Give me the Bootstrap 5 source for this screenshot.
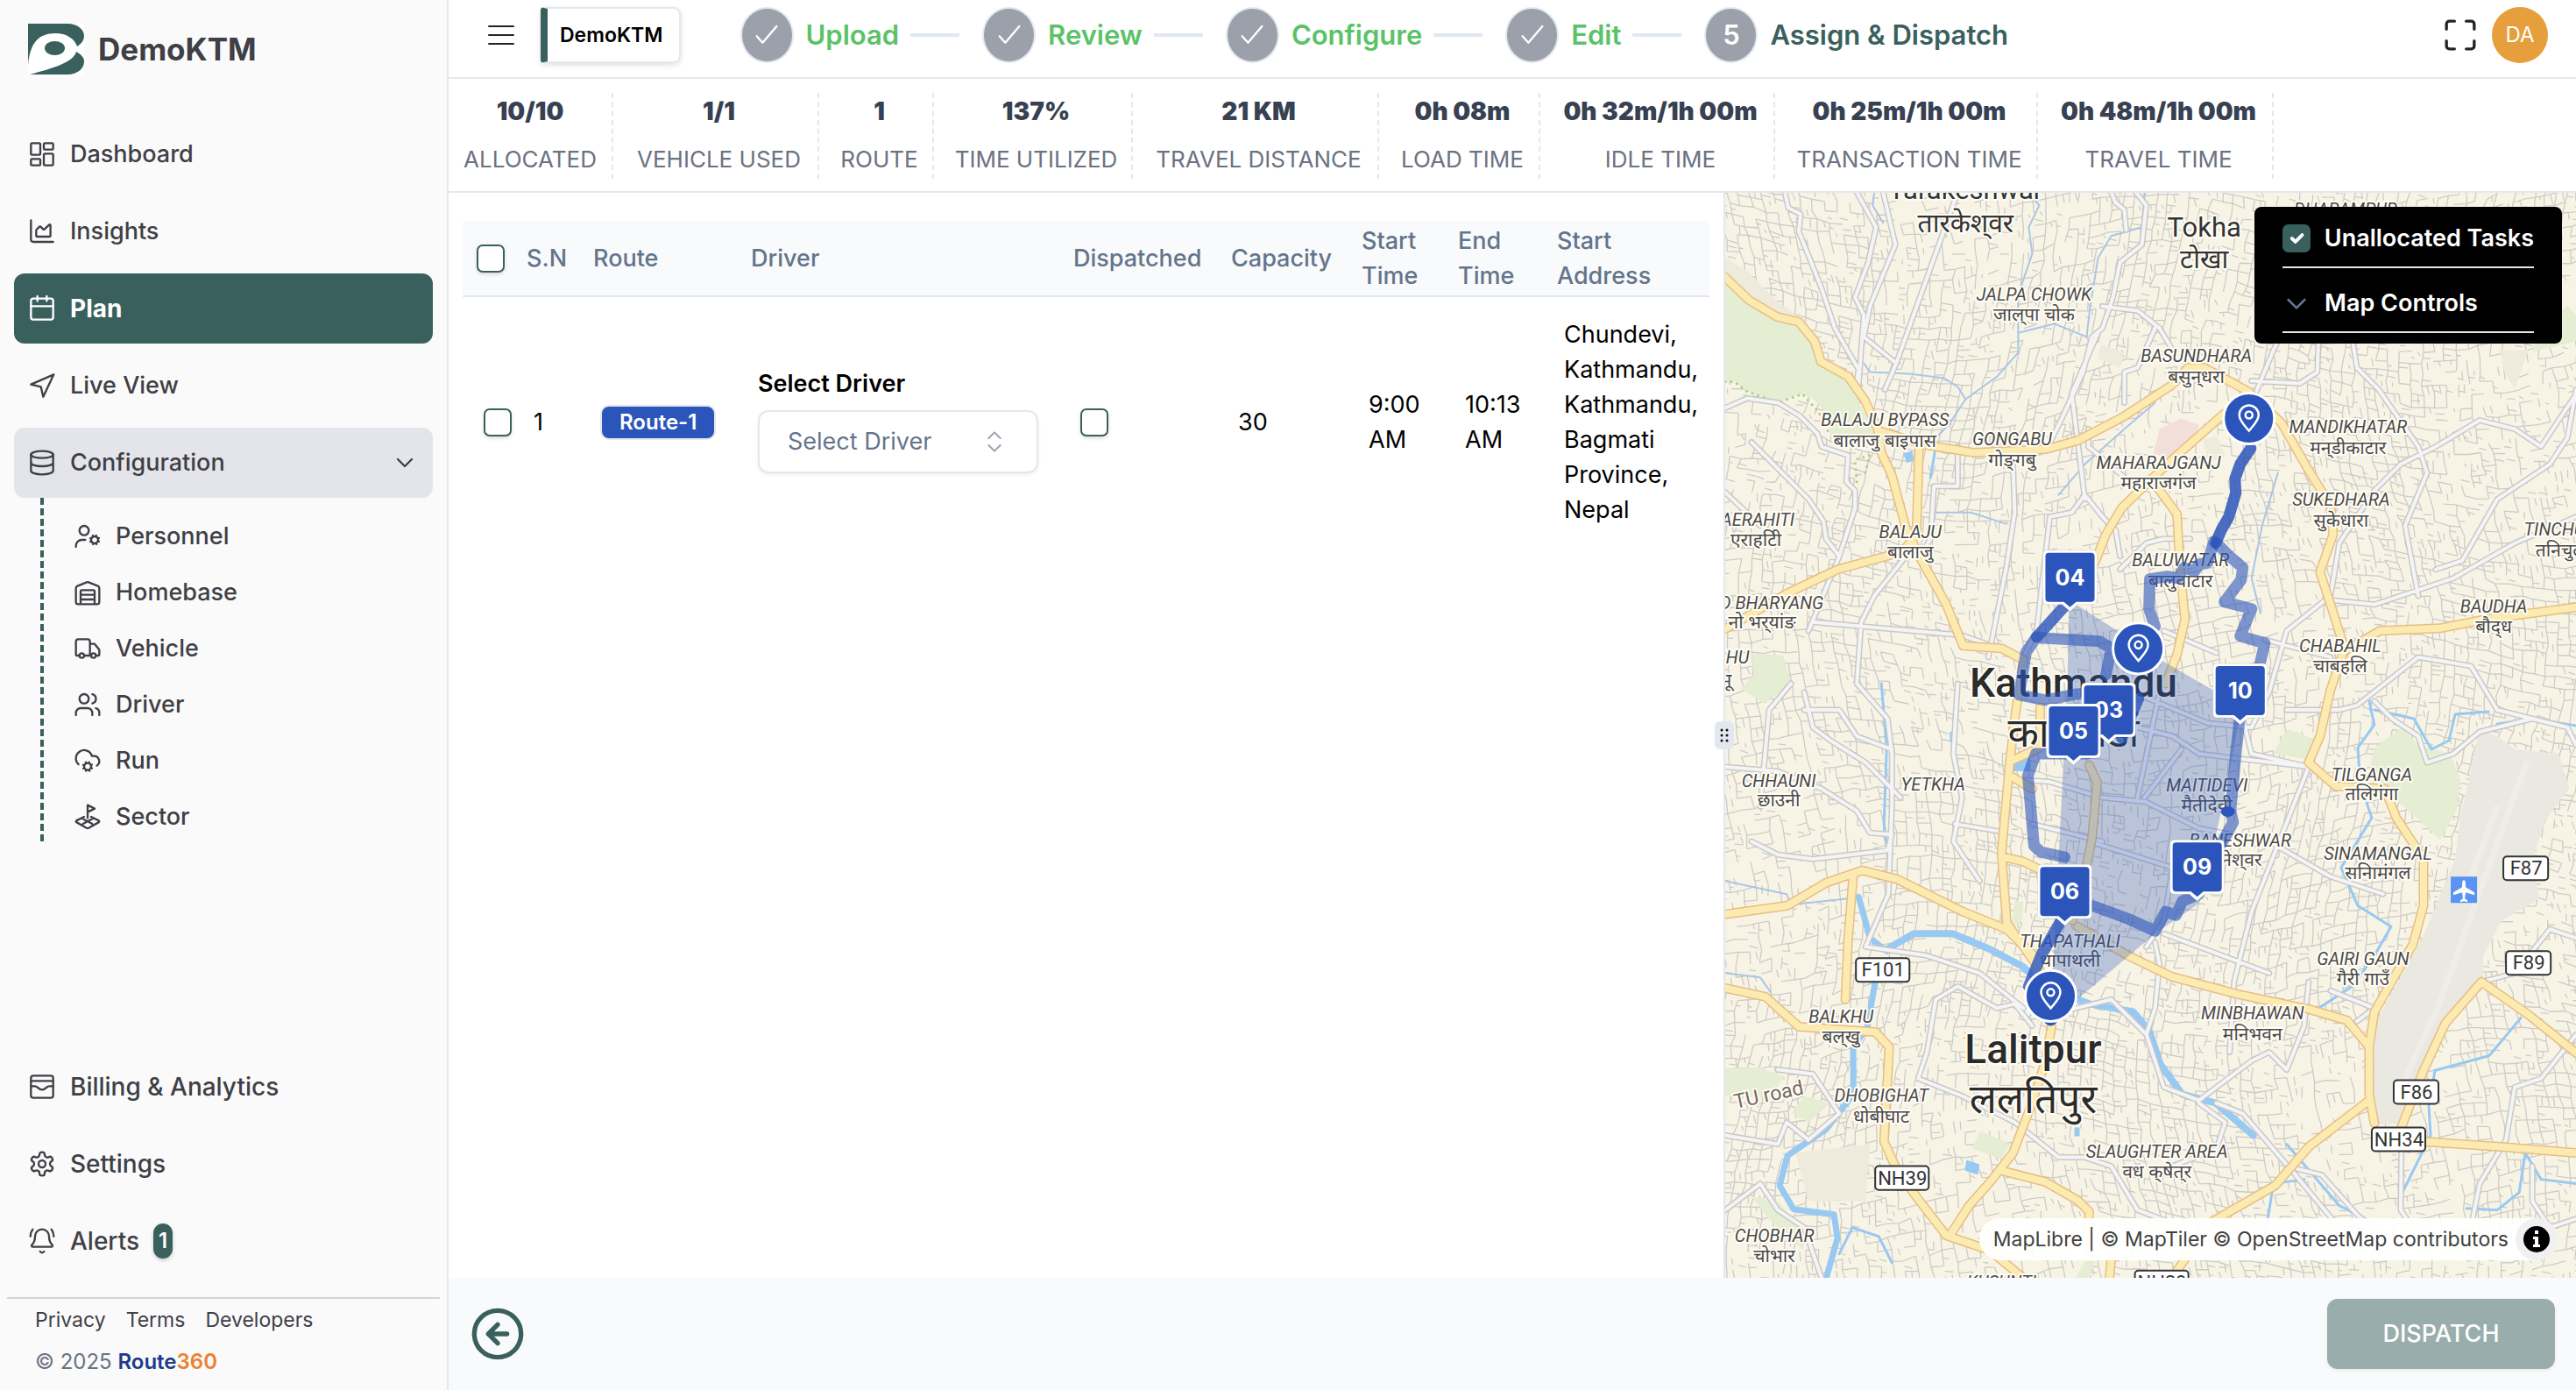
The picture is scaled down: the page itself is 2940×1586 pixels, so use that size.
<!DOCTYPE html>
<html lang="en">
<head>
<meta charset="utf-8">
<meta name="viewport" content="width=device-width, initial-scale=1">
<title>DemoKTM – Assign &amp; Dispatch</title>
<link href="https://cdn.jsdelivr.net/npm/bootstrap@5.3.0/dist/css/bootstrap.min.css" rel="stylesheet">
<style>
:root{--brand:#3a605e;--line:#e2e8f0;--ink:#3f3f46;--route:#2b55bb}
body{font-family:Inter,"Liberation Sans",sans-serif;font-size:27px;line-height:40px;color:#000;background:#fff}
a{color:inherit;text-decoration:none}
.ico{fill:none;stroke:currentColor;stroke-width:2;stroke-linecap:round;stroke-linejoin:round;flex:none;width:32px;height:32px}
/* sidebar */
.side{width:512px;background:#fafafa;border-right:2px solid var(--line);color:var(--ink);font-weight:500}
.brandrow{height:112px;padding-left:32px;gap:16px}
.brandname{font-size:35px;font-weight:700}
.side .ico{stroke-width:1.75}
.mainnav{gap:8px;padding:0 16px}
.mainnav .nav-link{height:80px;padding:0 16px;gap:16px;border-radius:12px;color:var(--ink);display:flex;align-items:center;width:100%}
.mainnav .nav-link.active{background:var(--brand);color:#fff;font-size:28px;font-weight:700}
.mainnav .nav-link.opened{background:#e4e5ea}
.subnav{margin:0 0 0 46px;padding-top:12px;background:repeating-linear-gradient(#3a605e 0 8px,transparent 8px 12px) left top/4px 100% no-repeat}
.subnav a{height:64px;display:flex;align-items:center;gap:16px;padding-left:38px}
.lownav .nav-link{font-size:28px}
.alertcount{background:var(--brand);color:#fff;width:22px;height:40px;border-radius:11px;font-size:24px;font-weight:600;text-align:center;box-shadow:0 2px 4px #0003}
.sidefoot{border-top:2px solid #d1d5db;margin:24px 8px 0;padding:4px 32px 12px;font-size:23px;font-weight:400}
.sidefoot a{margin-right:23px}
.copyline{font-size:24px}
/* header */
.topbar{height:90px;border-bottom:2px solid var(--line);padding:0 32px 8px 42px}
.menubtn{width:36px;height:48px}
.tenant{height:64px;padding:0 18px 0 14px;margin-left:27px;border:2px solid var(--line);border-left:8px solid var(--brand);border-radius:4px 8px 8px 4px;font-size:23px;font-weight:600;box-shadow:0 2px 6px #0002}
.steps{margin-left:68px;font-size:31px;font-weight:600;color:#5bc268}
.stepdot{width:61px;height:64px;border-radius:50%;background:#9ca0ab;border:2px solid var(--line);color:#fff;margin-right:14px}
.stepdot path{stroke-width:1.75}
.stepbar{width:56px;height:4px;background:var(--line);margin:0 26px 0 13px}
.avatar{width:64px;height:64px;border-radius:50%;background:#e69f3c;color:#fff;font-size:24px}
/* figures strip */
.stats{display:grid;grid-template-columns:188px 235px 131px 227px 281px 184px 268px 300px 269px;height:130px;padding:16px 0 14px;border-bottom:2px solid var(--line);text-align:center;font-size:26px}
.stats>div{border-right:2px dashed #e5e7eb;white-space:nowrap;color:#6b7280}
.stats>div+div{padding-left:8px}
.stats dt{font-size:28px;font-weight:900;color:#374151;line-height:42px;margin-bottom:14px}
.stats dd{margin:0}
/* table */
.tablepane{flex:0 0 60%;padding:32px 16px;border-right:2px solid var(--line)}
.plan{width:100%;table-layout:fixed;border-collapse:collapse}
.plan th{height:86px;padding:0 0 0 16px;background:#f8fafc;border-bottom:2px solid var(--line);color:#64748b;font-weight:500;line-height:40px}
.plan td{padding:23px 0 24px 24px;vertical-align:middle}
.tick{width:32px;height:32px;margin:0;border:2px solid var(--brand);border-radius:8px;display:block;box-shadow:0 2px 4px #0002;background-color:#fff}
.tick:checked{background-color:var(--brand);border-color:var(--brand);background-size:26px}
.routetag{display:block;width:fit-content;background:var(--route);color:#fff;font-size:24px;line-height:36px;font-weight:600;border:2px solid var(--line);border-radius:10px;padding:0 20px}
.driverlabel{display:block;font-weight:600;margin-bottom:10px}
.pick{width:320px;height:72px;margin-bottom:6px}
.pick select{width:100%;height:100%;appearance:none;border:2px solid var(--line);border-radius:12px;background:#fff;color:#64748b;padding-left:32px;box-shadow:0 2px 4px #0001}
.pick .ico{position:absolute;right:34px;top:20px;color:#9ca3af;pointer-events:none;stroke-width:1.500}
/* map */
.mapwrap{background:#f8f4e5;min-width:0}
.mapart{position:absolute;inset:0;width:100%;height:100%}
.area{font:italic 20px Roboto,"Noto Sans",sans-serif;fill:#4a4a4a}
.dev{font:21px "Noto Sans Devanagari","Noto Sans",Roboto,sans-serif;fill:#4a4a4a}
.lbl text{text-anchor:middle;paint-order:stroke;stroke:#fffdf5;stroke-width:4px;stroke-linejoin:round}
.lbl .town{font:31px Roboto,sans-serif;fill:#333}
.lbl .towndev{font:30px "Noto Sans Devanagari","Noto Sans",sans-serif;fill:#333}
.lbl .city{font:500 46px Roboto,sans-serif;fill:#2b2b2b}
.lbl .citydev{font:46px "Noto Sans Devanagari","Noto Sans",sans-serif;fill:#2b2b2b}
.lbl .roadname{font:23px Roboto,sans-serif;fill:#76675c}
.shield rect{fill:#fff;stroke:#333;stroke-width:2}
.shield text{font:22px Roboto,sans-serif;fill:#333;text-anchor:middle}
.stop text{font:700 25px Inter,sans-serif;fill:#fff;text-anchor:middle}
.mappanel{position:absolute;right:16px;top:16px;width:351px;background:#000;color:#fff;border-radius:8px;padding:14px 32px 12px;font-weight:600}
.maprow{height:56px;border-bottom:2px solid #e5e7eb;gap:16px;align-items:center;padding-bottom:10px}
.maprow+.maprow{height:74px;padding:8px 0 0}
.maprow label{white-space:nowrap}
.credit{position:absolute;right:21px;bottom:20px;height:48px;border-radius:24px;background:#fffffff0;padding-left:16px;font-size:23px;color:#404040;gap:8px}
.infobtn{width:48px;height:48px;border-radius:50%;background:#f0f0f0}
.grip{position:absolute;left:-12px;top:603px;width:22px;height:32px;border-radius:6px;background:var(--line)}
/* bottom bar */
.botbar{height:128px;background:#f8fafc;padding:0 24px}
.dispatch,.dispatch:disabled{width:260px;height:80px;border-radius:12px;background:#98adac;border:0;color:#fff;opacity:1;font-size:27px;font-weight:500;box-shadow:0 2px 4px #0001}
</style>
<script src="https://cdn.jsdelivr.net/npm/bootstrap@5.3.0/dist/js/bootstrap.bundle.min.js" defer></script>
</head>
<body>
<div class="d-flex vh-100 overflow-hidden">
<aside class="side d-flex flex-column flex-shrink-0">
  <a href="#" class="brandrow d-flex align-items-center">
    <svg width="64" height="58" viewBox="0 0 64 58" aria-hidden="true"><path fill="#fff" d="M0 0h64v58H0z"/><path fill="#3a605e" d="M0 0h45c12 0 19 7 19 14 0 5-3 9-8 12-3-9-12-15-25-15C12 11 2 22 0 48zM2 58c26-7 50-14 53-26 6 3 9 7 9 11 0 8-7 15-19 15z"/><ellipse cx="30.500" cy="28" rx="11.500" ry="8" fill="#3a605e"/></svg>
    <span class="brandname">DemoKTM</span>
  </a>
  <nav class="mainnav nav flex-column mt-4 flex-nowrap">
    <a class="nav-link" href="#"><svg class="ico" viewBox="0 0 24 24"><rect x="2.500" y="2.500" width="8" height="10" rx="1"/><rect x="13.500" y="2.500" width="8" height="5.500" rx="1"/><rect x="13.500" y="11.500" width="8" height="10" rx="1"/><rect x="2.500" y="16" width="8" height="5.500" rx="1"/></svg>Dashboard</a>
    <a class="nav-link" href="#"><svg class="ico" viewBox="0 0 24 24"><path d="M2.500 2.500v16.500a2 2 0 0 0 2 2h17"/><path d="M7 11.200c0-.3.100-.5.300-.7L9.600 8.200a1 1 0 0 1 1.400 0l1.800 1.800a1 1 0 0 0 1.400 0L18 6.400a.7.700 0 0 1 1.200.5V15.500a1 1 0 0 1-1 1H8a1 1 0 0 1-1-1z"/></svg>Insights</a>
    <a class="nav-link active" href="#"><svg class="ico" viewBox="0 0 24 24"><path d="M8 1.500v4M16 1.500v4M2.500 10h19"/><rect x="2.500" y="3.500" width="19" height="18" rx="2"/></svg>Plan</a>
    <a class="nav-link" href="#"><svg class="ico" viewBox="0 0 24 24"><path d="M2.500 11 22 2.500 13 21.500 11 13z"/></svg>Live View</a>
    <a class="nav-link opened" href="#"><svg class="ico" viewBox="0 0 24 24"><ellipse cx="12" cy="5" rx="9.500" ry="3"/><path d="M2.500 5v14c0 1.700 4.300 3 9.500 3s9.500-1.300 9.500-3V5M2.500 12c0 1.700 4.300 3 9.500 3s9.500-1.300 9.500-3"/></svg><span class="flex-grow-1">Configuration</span><svg class="ico" viewBox="0 0 24 24"><path d="m6 9 6 6 6-6"/></svg></a>
  </nav>
  <nav class="subnav">
    <a href="#"><svg class="ico" viewBox="0 0 24 24"><circle cx="9" cy="7" r="4"/><path d="M10 15H7a5 5 0 0 0-5 5v1"/><circle cx="18" cy="15" r="3"/><path d="m21.700 16.400-.9-.3M15.200 13.900l-.9-.3M16.600 18.700l.3-.9M19.100 12.200l.3-.9M19.600 18.700l-.4-1M16.800 12.300l-.4-1M14.300 16.600l1-.4M20.700 13.800l1-.4"/></svg>Personnel</a>
    <a href="#"><svg class="ico" viewBox="0 0 24 24"><path d="M22 8.400V20a2 2 0 0 1-2 2H4a2 2 0 0 1-2-2V8.400a2 2 0 0 1 1.300-1.900l8-3.200a2 2 0 0 1 1.500 0l8 3.200A2 2 0 0 1 22 8.400zM6 18h12M6 14h12M6 22V11a1 1 0 0 1 1-1h10a1 1 0 0 1 1 1v11"/></svg>Homebase</a>
    <a href="#"><svg class="ico" viewBox="0 0 24 24"><path d="M14 18V6a2 2 0 0 0-2-2H4a2 2 0 0 0-2 2v11a1 1 0 0 0 1 1h2M15 18H9M19 18h2a1 1 0 0 0 1-1v-3.600a1 1 0 0 0-.2-.6l-3.500-4.400a1 1 0 0 0-.8-.4H14"/><circle cx="17" cy="18" r="2"/><circle cx="7" cy="18" r="2"/></svg>Vehicle</a>
    <a href="#"><svg class="ico" viewBox="0 0 24 24"><path d="M16 21v-2a4 4 0 0 0-4-4H6a4 4 0 0 0-4 4v2"/><circle cx="9" cy="7" r="4"/><path d="M22 21v-2a4 4 0 0 0-3-3.900M16 3.100a4 4 0 0 1 0 7.800"/></svg>Driver</a>
    <a href="#"><svg class="ico" viewBox="0 0 24 24"><circle cx="12" cy="17" r="3"/><path d="M4.200 15.100A7 7 0 1 1 15.700 8h1.800a4.500 4.500 0 0 1 2.500 8.200M15.700 18.400l-.9-.3M9.200 15.900l-.9-.3M10.600 20.700l.3-.9M13.100 14.200l.3-.9M13.600 20.700l-.4-1M10.800 14.300l-.4-1M8.300 18.600l1-.4M14.700 15.800l1-.4"/></svg>Run</a>
    <a href="#"><svg class="ico" viewBox="0 0 24 24"><path d="m15 12 6.600 3.300a.8.800 0 0 1 0 1.300L12.900 21.600a2 2 0 0 1-1.800 0L2.400 16.600a.8.800 0 0 1 0-1.300L9 12M12 13V2l6 3-6 3M7.500 13.500l8.500 4.500M16.500 13.500 8 18"/></svg>Sector</a>
  </nav>
  <nav class="mainnav lownav nav flex-column mt-auto flex-nowrap">
    <a class="nav-link" href="#"><svg class="ico" viewBox="0 0 24 24"><rect x="2.500" y="2.500" width="19" height="19" rx="2"/><path d="M2.500 7h19M2.500 11.500h3.500c1 0 1.500.5 2 1 1 1 2.500 2 4 2s3-1 4-2c.5-.5 1-1 2-1h3.500"/></svg>Billing &amp; Analytics</a>
    <a class="nav-link" href="#"><svg class="ico" viewBox="0 0 24 24"><path d="M12.200 2h-.4a2 2 0 0 0-2 2v.2a2 2 0 0 1-1 1.700l-.4.300a2 2 0 0 1-2 0l-.2-.1a2 2 0 0 0-2.700.7l-.2.400a2 2 0 0 0 .7 2.700l.2.100a2 2 0 0 1 1 1.700v.5a2 2 0 0 1-1 1.800l-.2.100a2 2 0 0 0-.7 2.700l.2.400a2 2 0 0 0 2.700.7l.2-.1a2 2 0 0 1 2 0l.4.300a2 2 0 0 1 1 1.700v.2a2 2 0 0 0 2 2h.4a2 2 0 0 0 2-2v-.2a2 2 0 0 1 1-1.700l.4-.3a2 2 0 0 1 2 0l.2.100a2 2 0 0 0 2.700-.7l.2-.4a2 2 0 0 0-.7-2.700l-.2-.1a2 2 0 0 1-1-1.800v-.5a2 2 0 0 1 1-1.700l.2-.1a2 2 0 0 0 .7-2.700l-.2-.4a2 2 0 0 0-2.700-.7l-.2.100a2 2 0 0 1-2 0l-.4-.3a2 2 0 0 1-1-1.700V4a2 2 0 0 0-2-2z"/><circle cx="12" cy="12" r="3"/></svg>Settings</a>
    <a class="nav-link" href="#"><svg class="ico" viewBox="0 0 24 24"><path d="M10.300 21a2 2 0 0 0 3.400 0M22 8c0-2.300-.8-4.300-2-6M2 8c0-2.300.8-4.300 2-6M3.300 15.300A1 1 0 0 0 4 17h16a1 1 0 0 0 .7-1.700C19.400 14 18 12.500 18 8A6 6 0 0 0 6 8c0 4.500-1.400 6-2.700 7.300"/></svg>Alerts<span class="alertcount">1</span></a>
  </nav>
  <div class="sidefoot">
    <div><a href="#">Privacy</a><a href="#">Terms</a><a href="#">Developers</a></div>
    <div class="copyline mt-2"><span style="color:#6b7280">© 2025</span> <b class="fw-semibold"><span style="color:#1e3a8a">Route</span><span style="color:#ed8130">360</span></b></div>
  </div>
</aside>

<div class="d-flex flex-column flex-grow-1" style="min-width:0">
<header class="topbar d-flex align-items-center">
  <button class="menubtn btn p-0 border-0" aria-label="Menu"><svg class="ico" viewBox="0 0 32 32"><path d="M2 6h28M2 16h28M2 26h28"/></svg></button>
  <div class="tenant d-flex align-items-center">DemoKTM</div>
  <div class="steps d-flex align-items-center">
    <span class="stepdot d-flex align-items-center justify-content-center"><svg class="ico" viewBox="0 0 24 24"><path d="m3.500 13 5 5.500L20.500 4.500"/></svg></span>Upload<span class="stepbar"></span>
    <span class="stepdot d-flex align-items-center justify-content-center"><svg class="ico" viewBox="0 0 24 24"><path d="m3.500 13 5 5.500L20.500 4.500"/></svg></span>Review<span class="stepbar"></span>
    <span class="stepdot d-flex align-items-center justify-content-center"><svg class="ico" viewBox="0 0 24 24"><path d="m3.500 13 5 5.500L20.500 4.500"/></svg></span>Configure<span class="stepbar"></span>
    <span class="stepdot d-flex align-items-center justify-content-center"><svg class="ico" viewBox="0 0 24 24"><path d="m3.500 13 5 5.500L20.500 4.500"/></svg></span>Edit<span class="stepbar"></span>
    <span class="stepdot d-flex align-items-center justify-content-center">5</span><span style="color:#3a605e">Assign &amp; Dispatch</span>
  </div>
  <button class="btn p-0 border-0 ms-auto me-3" aria-label="Full screen"><svg class="ico d-block" style="width:40px;height:40px" viewBox="0 0 24 24"><path d="M2.500 8V4.500a2 2 0 0 1 2-2H8M16 2.500h3.500a2 2 0 0 1 2 2V8M21.500 16v3.500a2 2 0 0 1-2 2H16M8 21.500H4.500a2 2 0 0 1-2-2V16"/></svg></button>
  <span class="avatar d-flex align-items-center justify-content-center">DA</span>
</header>

<dl class="stats m-0">
  <div><dt>10/10</dt><dd>ALLOCATED</dd></div><div><dt>1/1</dt><dd>VEHICLE USED</dd></div><div><dt>1</dt><dd>ROUTE</dd></div><div><dt>137%</dt><dd>TIME UTILIZED</dd></div><div><dt>21 KM</dt><dd>TRAVEL DISTANCE</dd></div><div><dt>0h 08m</dt><dd>LOAD TIME</dd></div><div><dt>0h 32m/1h 00m</dt><dd>IDLE TIME</dd></div><div><dt>0h 25m/1h 00m</dt><dd>TRANSACTION TIME</dd></div><div><dt>0h 48m/1h 00m</dt><dd>TRAVEL TIME</dd></div>
</dl>

<main class="d-flex flex-grow-1" style="min-height:0">
<section class="tablepane">
<table class="plan">
<colgroup><col style="width:57px"><col style="width:76px"><col style="width:180px"><col style="width:368px"><col style="width:180px"><col style="width:149px"><col style="width:110px"><col style="width:113px"><col></colgroup>
<thead><tr><th><input class="form-check-input tick" type="checkbox" aria-label="Select all"></th><th>S.N</th><th>Route</th><th>Driver</th><th>Dispatched</th><th>Capacity</th><th>Start<br>Time</th><th>End<br>Time</th><th>Start<br>Address</th></tr></thead>
<tbody><tr><td><input class="form-check-input tick" type="checkbox" aria-label="Select route 1"></td><td>1</td><td><span class="routetag">Route-1</span></td>
<td><label class="driverlabel" for="drv">Select Driver</label><div class="pick position-relative"><select id="drv"><option>Select Driver</option></select><svg class="ico" viewBox="0 0 24 24"><path d="m7 15 5 5 5-5M7 9l5-5 5 5"/></svg></div></td>
<td><input class="form-check-input tick" type="checkbox" aria-label="Dispatched"></td><td>30</td><td>9:00<br>AM</td><td>10:13<br>AM</td><td>Chundevi,<br>Kathmandu,<br>Kathmandu,<br>Bagmati<br>Province,<br>Nepal</td></tr></tbody>
</table>
</section>

<section class="mapwrap flex-grow-1 position-relative">
<svg class="mapart" viewBox="0 0 970 1238" preserveAspectRatio="xMidYMid slice" role="img" aria-label="Map of Kathmandu with Route-1">
<path id="streets" fill="none" stroke="#cdcbc8" stroke-width="1.300" stroke-linejoin="round"/>
<g fill="#e5edd2">
<path d="M0 86 27 120 59 142 84 150 98 170 106 195 138 213 155 245 172 278 120 278 118 255 100 235 84 230 60 240 25 227 10 215 0 218z"/>
<path d="M740 633 771 610 790 630 827 640 838 670 834 703 815 738 790 715 765 693 734 663z"/>
<path d="M640 612 668 622 668 647 625 640z"/><path d="M30 525 66 528 75 560 45 583 18 566 32 550z"/>
<path d="M0 998 40 998 68 1008 50 1032 0 1030z"/><path d="M90 1030 120 1038 95 1060 76 1050z"/><path d="M290 1070 325 1085 315 1102 282 1090z"/>
<path d="M920 182 925 155 960 130 970 140 970 170 945 176z"/><path d="M30 1145 60 1150 78 1172 95 1190 88 1205 50 1170z"/><path d="M330 808 340 808 338 830 326 840z"/><path d="M410 1218 422 1218 415 1238 400 1238z"/>
</g>
<path fill="none" stroke="#a8cd85" stroke-width="3" stroke-linecap="round" stroke-dasharray="0 7" d="M0 216 10 216 25 227 60 240 88 230 106 250 120 278M150 330 148 305 165 300 158 325M40 124 60 130"/>
<path fill="#eeebdc" d="M884 180 915 180 900 225 888 205zM0 75 25 90 60 125 95 150 50 136 0 95zM80 1095 165 1085 160 1150 95 1150zM545 282 560 278 570 300 550 310zM428 174 455 182 450 200 425 190z"/>
<path fill="#f3dfda" d="M488 298 495 270 520 258 540 265 535 285 515 302 500 302z"/>
<path fill="#e9e8e1" d="M859 612 880 620 900 635 950 640 962 680 935 715 920 760 928 805 885 830 864 870 864 895 832 930 803 1000 778 1062 745 1062 738 1020 742 945 795 850 832 760 838 712 850 660z"/>
<path fill="none" stroke="#eeede8" stroke-width="7" d="M914 648 812 930 766 1030M880 700 850 780"/>
<g fill="none" stroke="#97c9f2" stroke-linecap="round" stroke-linejoin="round">
<path stroke-width="2" stroke="#a9c6e6" d="M345 0 358 15 346 40 350 70 334 117 334 183 310 210 274 236 255 265 240 280M158 195 165 205 210 207 250 212 265 222 274 236M335 160 375 150 412 165 416 130 425 75 440 50 475 40 478 0M490 240 455 270 410 310 380 345M170 0 168 15 180 35M630 320 612 380 600 440 610 480M0 785 70 800 75 812 140 805M0 890 40 895 52 912M240 365 280 365 320 378"/>
<path stroke-width="3" d="M178 560 184 633 181 720 186 760M240 290 234 325"/>
<path stroke-width="3" d="M734 580 740 607 721 633 724 675 737 713 702 770 721 813 759 837 740 870 715 905 678 929M740 590 785 600 805 635 825 625 832 595 870 592M880 606 920 600 970 608M907 941 871 984 809 1001 802 1041 804 1075 771 1142M970 1130 930 1125 912 1095 905 1140 880 1160 845 1158M560 1195 615 1190 625 1130 660 1125M130 1210 145 1180 175 1190 190 1220M640 1085 700 1155 730 1170"/>
<path stroke-width="8" d="M184 863 215 845 259 845 302 863 340 883 365 907 415 925 465 934 484 957 496 994 521 1028 559 1038 602 1075"/>
<path stroke-width="7" d="M171 900 162 951 146 974 146 1028 115 1068 71 1098 62 1132 78 1159 124 1165 128 1192 115 1238M152 803 165 850 184 865"/>
</g>
<path fill="#97c9f2" d="M328 645h20v15h-20zM256 615h6v12h-6zM275 1103 290 1108 288 1120 273 1115zM398 1066h6v10h-6zM203 298l10-3 2 10-8 4z"/>
<g fill="none" stroke-linecap="round" stroke-linejoin="round">
<g id="whites"><path d="M68 0 72 18 86 25 84 45 110 110 125 155 152 202 150 215M150 0 172 40 163 80 148 120 158 140 152 220M180 0 194 60 165 130 158 165 195 195M265 0 195 195 182 225M410 350 395 230 425 160M468 0 480 15 475 60 450 80 442 120 430 155 418 165 408 205 385 255 372 282M440 0 445 12 455 20 457 43M430 130 470 135 495 155 510 180M455 240 455 205 470 200 490 155M414 270 414 290 455 325M600 215 655 218 675 205 677 140M600 240 625 180 640 150 680 170 715 168 720 200 745 225 790 290 800 320 775 380 790 460M970 230 930 290 900 270 860 260 810 290 770 310 740 340 700 400 690 460 640 500 620 570 600 610M970 225 960 280 940 310 880 350 840 420 810 430M0 246 25 235 60 240 85 255 105 275 110 290 140 300 138 330 148 340M0 342 40 380M30 285 70 325 95 350 112 375 115 395 130 415M148 340 148 360 130 415M265 290 265 335 238 335 234 395 225 410M340 530 355 500 370 370 395 365 410 345 430 370 445 385 450 415M328 310 330 365 320 430 300 530M210 410 170 460 155 490 150 560 185 600 190 640 190 700 186 800 160 860 230 870 290 890 340 930M100 490 270 505 340 530M130 415 95 500M90 590 130 590 150 620 190 635M75 560 50 590 40 700M90 570 100 610 120 625 160 650 200 690M0 655 60 660 110 680 150 705 165 730 190 732 185 750 100 760 60 755 30 740M265 560 260 640 270 690 260 740 290 785M262 720 310 728M340 670 370 672 430 690 480 695 540 725 620 740 690 780 750 800M465 570 550 605 600 610M470 610 510 620 540 640 665 655M520 635 478 690M495 570 470 690M415 740 510 770 500 830 480 860M500 500 560 525M615 510 690 530M665 655 600 820 580 900 575 980M640 590 700 590 720 585 790 530 850 540 880 590 960 610 970 630M740 580 760 600 790 620 800 650 830 640 860 615 920 600M665 655 600 640 590 600 620 570M490 855 495 880 490 930 480 960M350 720 430 740M690 465 740 470 830 440 900 400 970 370M450 430 480 400 500 395 530 395M60 1000 100 1005 130 1050 95 1080 70 1060 60 1085 0 1075M220 1010 230 980 240 920 265 905 310 930 330 925 350 950M220 1010 270 1030 330 1060 380 1100 410 1100 440 1110 470 1160 510 1175M0 1160 40 1130 60 1160 90 1180 110 1238M560 1038 590 1050 650 1120 700 1180 760 1190M350 940 400 930 440 920 480 960 500 1020 540 1035 600 990 620 980 640 1000 660 950 665 900M720 945 740 930 690 910M620 890 500 845M540 1038 570 1060 560 1090 510 1110M640 1110 680 1120 720 1165 750 1190M862 900 900 890 940 840 970 850M970 960 930 1010 900 1020 890 1080 860 1130 850 1180M920 1110 920 1150 940 1180 970 1170M771 1070 770 1160 790 1190 880 1185"/></g>
<g id="yellows"><path d="M0 97 27 123 59 142 84 148 102 170 109 193 140 210 159 237 174 270 178 297 190 323 206 383 224 420 252 470 271 517 315 520 340 533 331 593 324 653 315 753 321 833 359 887M178 273 228 288 284 297 365 293 402 283 452 257 509 220 528 200 546 200 596 227 634 263 665 317 690 357 693 390 678 433 690 470 706 520 690 567 678 620 665 650 696 677 752 680 765 713 796 760 796 813 784 857 740 934 734 974 734 1028 740 1061M221 290 218 390 202 410 128 430 71 457 0 498M568 253 515 300 490 323 452 360 434 390 421 423M493 337 515 367 518 423 524 487 515 527 502 560M706 523 746 500 815 497 865 487 970 473M0 823 71 813 115 787 156 773 196 783 271 820 321 840 359 877M146 777 140 853 137 920M0 907 46 917 84 951 171 957 187 974 184 1028 181 1082 196 1115 221 1149 252 1189 302 1206 340 1238M256 1189 278 1155 302 1128 328 1095 346 1048 365 991 372 951M315 1115 365 1128 402 1149 415 1162 412 1200M440 1215 438 1238M402 837 459 870 509 894 584 914 665 931 709 944 734 974M734 1035 665 1088 627 1132 552 1175 509 1238M771 1065 796 1001 821 947 862 900 915 937 970 981M796 1082 884 1088 970 1095M359 587 359 633 328 647M415 653 424 673 418 737 412 767 396 830M328 667 350 680M315 757 340 763 365 775"/></g>
</g>
<g class="lbl">
<text class="town" x="274" y="8">Tarakeshwar</text><text class="towndev" x="274" y="46">तारकेश्&zwnj;वर</text>
<text class="town" x="546" y="51">Tokha</text><text class="towndev" x="546" y="87">टोखा</text>
<text class="area" x="707" y="27">DHARAMPUR</text>
<text class="area" x="352" y="124">JALPA CHOWK</text><text class="dev" x="352" y="147">जाल्&zwnj;पा चोक</text>
<text class="area" x="537" y="194">BASUNDHARA</text><text class="dev" x="537" y="218">बसुन्&zwnj;धरा</text>
<text class="area" x="182" y="266">BALAJU BYPASS</text><text class="dev" x="182" y="290">बालाजु बाइपास</text>
<text class="area" x="327" y="288">GONGABU</text><text class="dev" x="327" y="312">गोङ्&zwnj;गबु</text>
<text class="area" x="710" y="274">MANDIKHATAR</text><text class="dev" x="710" y="298">मन्&zwnj;डीकाटार</text>
<text class="area" x="494" y="315">MAHARAJGANJ</text><text class="dev" x="494" y="338">महाराजगंज</text>
<text class="area" x="702" y="357">SUKEDHARA</text><text class="dev" x="702" y="381">सुकेधारा</text>
<text class="area" x="37" y="380">AERAHITI</text><text class="dev" x="35" y="403">एराहटिी</text>
<text class="area" x="211" y="394">BALAJU</text><text class="dev" x="211" y="417">बालाजु</text>
<text class="area" x="956" y="391">TINCHULE</text><text class="dev" x="952" y="415">तनिचुले</text>
<text class="area" x="519" y="426">BALUWATAR</text><text class="dev" x="519" y="450">बालुवाटार</text>
<text class="area" x="53" y="475">D BHARYANG</text><text class="dev" x="42" y="497">नो भर्&zwnj;यांङ</text>
<text class="area" x="876" y="479">BAUDHA</text><text class="dev" x="876" y="502">बौद्&zwnj;ध</text>
<text class="area" x="8" y="537">BHU</text><text class="dev" x="0" y="563">भू</text>
<text class="area" x="701" y="524">CHABAHIL</text><text class="dev" x="701" y="547">चाबहलि</text>
<text class="city" x="397" y="575">Kathmandu</text><text class="citydev" x="397" y="632">काठमाडौं</text>
<text class="area" x="61" y="678">CHHAUNI</text><text class="dev" x="61" y="700">छाउनी</text>
<text class="area" x="237" y="682">YETKHA</text>
<text class="area" x="549" y="683">MAITIDEVI</text><text class="dev" x="549" y="706">मैतीदेवी</text>
<text class="area" x="737" y="671">TILGANGA</text><text class="dev" x="737" y="693">तलिगंगा</text>
<text class="area" x="587" y="746">BANESHWAR</text><text class="dev" x="580" y="768">बानेश्&zwnj;वर</text>
<text class="area" x="744" y="761">SINAMANGAL</text><text class="dev" x="744" y="783">सनिामंगल</text>
<text class="area" x="393" y="861">THAPATHALI</text><text class="dev" x="393" y="883">थापाथली</text>
<text class="area" x="727" y="881">GAIRI GAUN</text><text class="dev" x="727" y="904">गैरी गाउँ</text>
<text class="area" x="601" y="943">MINBHAWAN</text><text class="dev" x="601" y="967">मनिभवन</text>
<text class="area" x="132" y="947">BALKHU</text><text class="dev" x="132" y="970">बल्&zwnj;खु</text>
<text class="area" x="178" y="1036">DHOBIGHAT</text><text class="dev" x="178" y="1060">धोबीघाट</text>
<text class="area" x="492" y="1100">SLAUGHTER AREA</text><text class="dev" x="492" y="1123">वध क्&zwnj;षेत्&zwnj;र</text>
<text class="area" x="56" y="1196">CHOBHAR</text><text class="dev" x="56" y="1219">चोभार</text>
<text class="area" x="315" y="1249">KUSUNTI</text>
<text class="city" x="351" y="993">Lalitpur</text><text class="citydev" x="351" y="1049">ललतिपुर</text>
<text class="roadname" x="51" y="1036" transform="rotate(-12 51 1036)">TU road</text>
</g>
<g class="shield">
<rect x="149" y="873" width="61" height="27" rx="4"/><text x="180" y="894">F101</text>
<rect x="887" y="757" width="51" height="27" rx="4"/><text x="913" y="778">F87</text>
<rect x="890" y="865" width="51" height="27" rx="4"/><text x="916" y="886">F89</text>
<rect x="762" y="1012" width="51" height="27" rx="4"/><text x="788" y="1033">F86</text>
<rect x="737" y="1066" width="61" height="27" rx="4"/><text x="768" y="1087">NH34</text>
<rect x="171" y="1110" width="61" height="27" rx="4"/><text x="202" y="1131">NH39</text>
<rect x="467" y="1229" width="61" height="27" rx="4"/><text x="498" y="1250">NH39</text>
</g>
<rect x="827" y="780" width="30" height="30" fill="#5b93f5"/><path fill="#fff" d="M842 784c2 0 2 3 2 8l10 6v3l-10-3-1 7 3 2v2l-4-1-4 1v-2l3-2-1-7-10 3v-3l10-6c0-5 0-8 2-8z"/>
<path fill="#2b55bb" fill-opacity=".3" d="M392 465 455 505 500 535 557 568 590 590 584 610 571 680 556 748 545 800 538 812 490 845 405 917 372 925 375 860 380 760 390 560z"/>
<g fill="none" stroke="#2b55bb" stroke-linecap="round" stroke-linejoin="round" stroke-width="13">
<path stroke-opacity=".85" d="M599 292 587 310 581 327 582 343 574 370 566 384 559 400"/>
<path stroke-opacity=".6" d="M557 398 550 422 540 424 535 432 523 428 516 440 504 438 484 441 483 475 490 495"/>
<path stroke-opacity=".6" d="M560 400 575 415 590 428 588 442 569 467 600 475 587 506 615 514 609 540M587 595 582 640 576 705 579 718 566 742"/>
<path stroke-opacity=".8" d="M393 465 355 507M384 828 360 870 346 905M471 577 452 622 448 600"/>
<path stroke-opacity=".6" d="M355 507 343 524 335 573 365 579 400 572 440 569M358 508 427 512 440 520 434 550M412 640 354 640 345 665 352 745 360 752 387 758M396 810 421 814 459 828 490 842 502 820 514 824 521 808 540 800"/>
</g>
<ellipse cx="573" cy="706" rx="8" ry="6" fill="#2b55bb"/><circle cx="371" cy="942" r="8" fill="#2b55bb"/>
<defs><g id="pinmark"><circle r="29" fill="#2b55bb" stroke="#fff" stroke-width="3"/><path fill="none" stroke="#fff" stroke-width="2.500" d="M0 14C-4 9-11 3-11-4a11 11 0 0 1 22 0c0 7-7 13-11 18z"/><circle cy="-4" r="4" fill="none" stroke="#fff" stroke-width="2.500"/></g>
<g id="boxmark"><path d="M-26-31h52q5 0 5 5v52q0 5-5 5H9L0 39-9 31h-17q-5 0-5-5v-52q0-5 5-5z" fill="#fff" stroke="#00000018"/><path d="M-24-28h48q4 0 4 4v48q0 4-4 4H7L0 34-7 28h-17q-4 0-4-4v-48q0-4 4-4z" fill="#2b55bb"/></g></defs>
<use href="#pinmark" x="597" y="258"/><use href="#pinmark" x="471" y="520"/><use href="#pinmark" x="371" y="916"/>
<g class="stop">
<use href="#boxmark" x="393" y="439"/><text x="393" y="448">04</text>
<use href="#boxmark" x="437" y="590"/><text x="437" y="599">03</text>
<use href="#boxmark" x="397" y="614"/><text x="397" y="623">05</text>
<use href="#boxmark" x="587" y="568"/><text x="587" y="577">10</text>
<use href="#boxmark" x="387" y="797"/><text x="387" y="806">06</text>
<use href="#boxmark" x="538" y="769"/><text x="538" y="778">09</text>
</g>
</svg>
<div class="mappanel">
  <div class="maprow d-flex"><input class="form-check-input tick" id="unal" type="checkbox" checked><label for="unal">Unallocated Tasks</label></div>
  <div class="maprow d-flex"><svg class="ico" viewBox="0 0 24 24" style="color:#64748b"><path d="m5 9 7 7 7-7"/></svg>Map Controls</div>
</div>
<div class="credit d-flex align-items-center"><span><a href="#">MapLibre</a> | <a href="#">© MapTiler</a> <a href="#">© OpenStreetMap contributors</a></span>
<button class="infobtn btn p-0 border-0" aria-label="Toggle attribution"><svg width="30" height="30" viewBox="0 0 30 30"><circle cx="15" cy="15" r="15"/><path fill="#fff" d="M13 5h4v4h-4zM11 12h6v9h2v3h-8v-3h2v-6h-2z"/></svg></button></div>
<div class="grip d-flex align-items-center justify-content-center"><svg width="10" height="16" viewBox="0 0 10 16"><g fill="#111"><circle cx="2" cy="2" r="1.500"/><circle cx="8" cy="2" r="1.500"/><circle cx="2" cy="8" r="1.500"/><circle cx="8" cy="8" r="1.500"/><circle cx="2" cy="14" r="1.500"/><circle cx="8" cy="14" r="1.500"/></g></svg></div>
</section>
</main>

<footer class="botbar d-flex align-items-center justify-content-between">
  <button class="btn p-0 border-0" aria-label="Back"><svg class="ico d-block" style="width:64px;height:64px;color:#3a605e" viewBox="0 0 24 24"><circle cx="12" cy="12" r="10"/><path d="M16 12H8M12 8l-4 4 4 4"/></svg></button>
  <button class="btn dispatch" disabled>DISPATCH</button>
</footer>
</div>
</div>
<script>
/* Casing under each road class, then the fill on top. */
function roads(id, casing, wide, fill, narrow){
  const g=document.getElementById(id),p=g.firstElementChild,q=p.cloneNode();
  p.setAttribute('stroke',casing);p.setAttribute('stroke-width',wide);
  q.setAttribute('stroke',fill);q.setAttribute('stroke-width',narrow);
  g.appendChild(q);
}
roads('whites','#c9c8c8',7,'#f4f4f5',4);
roads('yellows','#e8bd84',11,'#fcebb0',8);
/* Minor streets: a gently warped lattice with links left out and short stubs. */
let s=7;const rnd=()=>(s=(s*16807)%2147483647)/2147483647;
const N=13,W=84,H=104,pt=[];
for(let j=0;j<H;j++)for(let i=0;i<W;i++){
  const x=i*N-40,y=j*N-40;
  pt.push([x+26*Math.sin(y/110+x/260)+rnd()*4,y+24*Math.sin(x/95-y/210)+rnd()*4]);
}
let d='';
const line=(...p)=>{d+='M'+p.map(v=>v.toFixed(1)).join(' ')};
for(let j=0;j<H-1;j++)for(let i=0;i<W-1;i++){
  const k=j*W+i,a=pt[k],r=pt[k+1],b=pt[k+W];
  const dense=.5+.22*Math.sin(a[0]/70+1)*Math.cos(a[1]/85);
  if(rnd()<dense)line(...a,...r);
  if(rnd()<dense+.12)line(...a,...b);
  if(rnd()<.25)line((a[0]+r[0])/2,(a[1]+r[1])/2,(a[0]+r[0])/2+rnd()*3,(a[1]+r[1])/2+4+rnd()*7);
  if(rnd()<.25)line((a[0]+b[0])/2,(a[1]+b[1])/2,(a[0]+b[0])/2+4+rnd()*7,(a[1]+b[1])/2+rnd()*3);
}
document.getElementById('streets').setAttribute('d',d);
</script>
</body>
</html>
